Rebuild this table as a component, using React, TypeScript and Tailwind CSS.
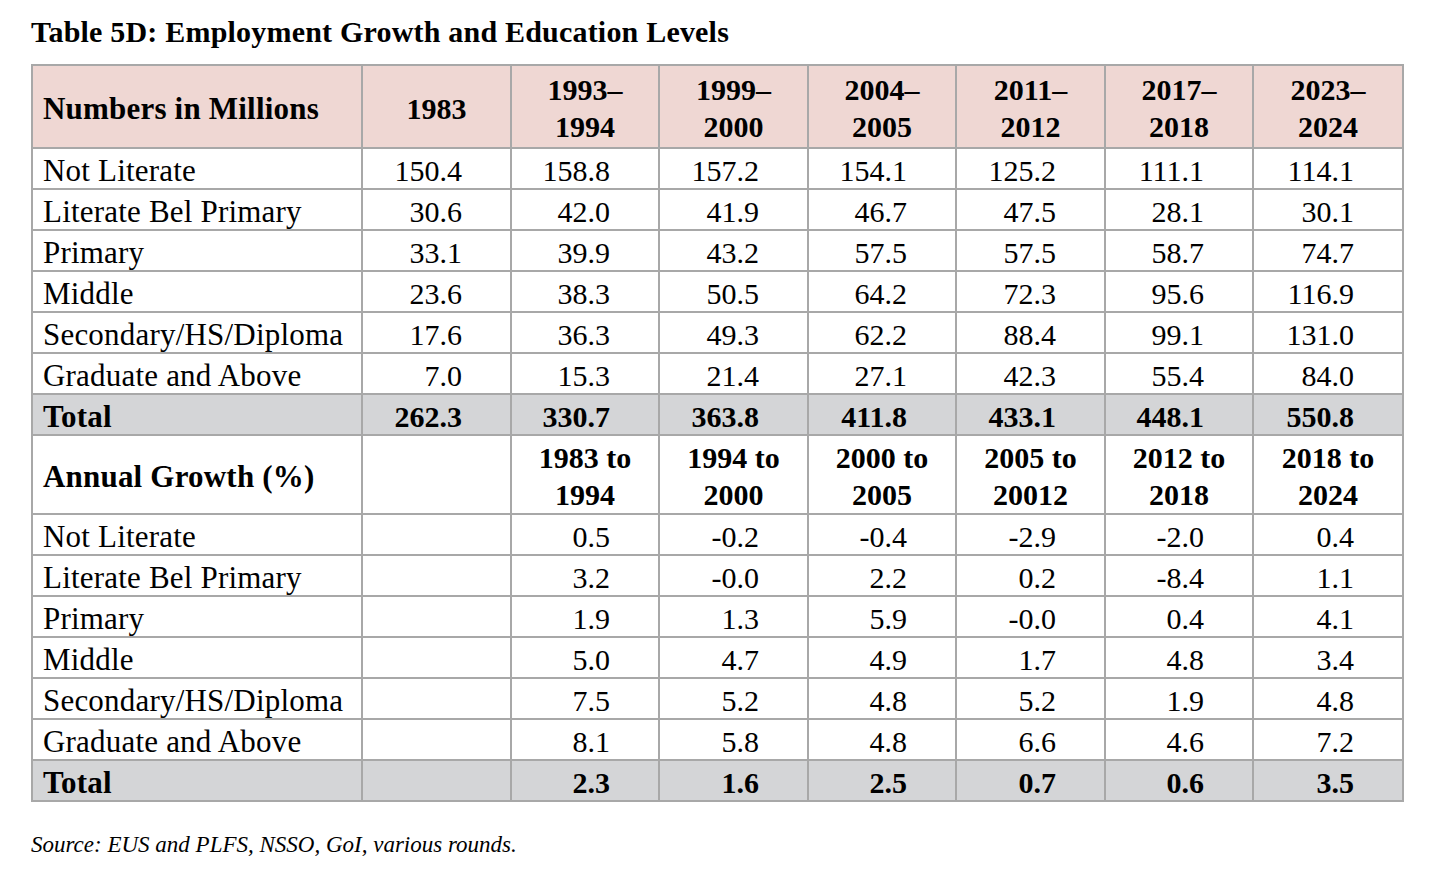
const years = ["1983", "1993–1994", "1999–2000", "2004–2005", "2011–2012", "2017–2018", "2023–2024"];
const periods = ["", "1983 to 1994", "1994 to 2000", "2000 to 2005", "2005 to 20012", "2012 to 2018", "2018 to 2024"];

const levels: [string, string[]][] = [
  ["Not Literate", ["150.4", "158.8", "157.2", "154.1", "125.2", "111.1", "114.1"]],
  ["Literate Bel Primary", ["30.6", "42.0", "41.9", "46.7", "47.5", "28.1", "30.1"]],
  ["Primary", ["33.1", "39.9", "43.2", "57.5", "57.5", "58.7", "74.7"]],
  ["Middle", ["23.6", "38.3", "50.5", "64.2", "72.3", "95.6", "116.9"]],
  ["Secondary/HS/Diploma", ["17.6", "36.3", "49.3", "62.2", "88.4", "99.1", "131.0"]],
  ["Graduate and Above", ["7.0", "15.3", "21.4", "27.1", "42.3", "55.4", "84.0"]],
];
const totals = ["262.3", "330.7", "363.8", "411.8", "433.1", "448.1", "550.8"];

const growth: [string, string[]][] = [
  ["Not Literate", ["", "0.5", "-0.2", "-0.4", "-2.9", "-2.0", "0.4"]],
  ["Literate Bel Primary", ["", "3.2", "-0.0", "2.2", "0.2", "-8.4", "1.1"]],
  ["Primary", ["", "1.9", "1.3", "5.9", "-0.0", "0.4", "4.1"]],
  ["Middle", ["", "5.0", "4.7", "4.9", "1.7", "4.8", "3.4"]],
  ["Secondary/HS/Diploma", ["", "7.5", "5.2", "4.8", "5.2", "1.9", "4.8"]],
  ["Graduate and Above", ["", "8.1", "5.8", "4.8", "6.6", "4.6", "7.2"]],
];
const growthTotals = ["", "2.3", "1.6", "2.5", "0.7", "0.6", "3.5"];

const cell = "border-2 border-[#a8a8a8] p-0 pt-[3px]";
const labelCell = `${cell} pl-[10px] text-left text-[31px] tracking-[0.2px]`;
const numCell = `${cell} pr-[48px] text-right text-[30px]`;

function DataRow({ label, values }: { label: string; values: string[] }) {
  return (
    <tr className="h-[41px]">
      <td className={labelCell}>{label}</td>
      {values.map((v, i) => (
        <td key={i} className={numCell}>
          {v}
        </td>
      ))}
    </tr>
  );
}

function TotalRow({ values }: { values: string[] }) {
  return (
    <tr className="h-[41px] bg-[#d4d5d7] font-bold">
      <td className={labelCell}>Total</td>
      {values.map((v, i) => (
        <td key={i} className={numCell}>
          {v}
        </td>
      ))}
    </tr>
  );
}

function HeadLines({ text, sep }: { text: string; sep: string }) {
  if (!text) return null;
  const idx = text.indexOf(sep);
  if (idx < 0) return <>{text}</>;
  const a = text.slice(0, idx + sep.length).trim();
  const b = text.slice(idx + sep.length).trim();
  return (
    <>
      <div className="leading-[37px]">{a}</div>
      <div className="leading-[37px]">{b}</div>
    </>
  );
}

export default function App() {
  return (
    <div className="min-h-[869px] w-[1456px] bg-white text-black font-['Liberation_Serif',serif]">
      <div className="pl-[31px] pt-[13px]">
        <h1 className="text-[30px] font-bold leading-[38px] tracking-[0.2px]">
          Table 5D: Employment Growth and Education Levels
        </h1>
        <table className="mt-[13px] w-[1371px] table-fixed border-collapse text-[30px] leading-[33px]">
          <colgroup>
            <col className="w-[330px]" />
            <col className="w-[149px]" />
            <col className="w-[148px]" />
            <col className="w-[149px]" />
            <col className="w-[148px]" />
            <col className="w-[149px]" />
            <col className="w-[148px]" />
            <col className="w-[150px]" />
          </colgroup>
          <tbody>
            <tr className="h-[83px] bg-[#efd7d3] font-bold">
              <td className={labelCell}>Numbers in Millions</td>
              {years.map((y) => (
                <td key={y} className={`${cell} text-center`}>
                  <HeadLines text={y} sep="–" />
                </td>
              ))}
            </tr>
            {levels.map(([l, v]) => (
              <DataRow key={l} label={l} values={v} />
            ))}
            <TotalRow values={totals} />
            <tr className="h-[78px] font-bold">
              <td className={labelCell}>Annual Growth (%)</td>
              {periods.map((p, i) => (
                <td key={i} className={`${cell} text-center`}>
                  <HeadLines text={p} sep="to" />
                </td>
              ))}
            </tr>
            {growth.map(([l, v]) => (
              <DataRow key={"g" + l} label={l} values={v} />
            ))}
            <TotalRow values={growthTotals} />
          </tbody>
        </table>
        <p className="mt-[28px] text-[23px] italic leading-[30px]">
          Source: EUS and PLFS, NSSO, GoI, various rounds.
        </p>
      </div>
    </div>
  );
}
